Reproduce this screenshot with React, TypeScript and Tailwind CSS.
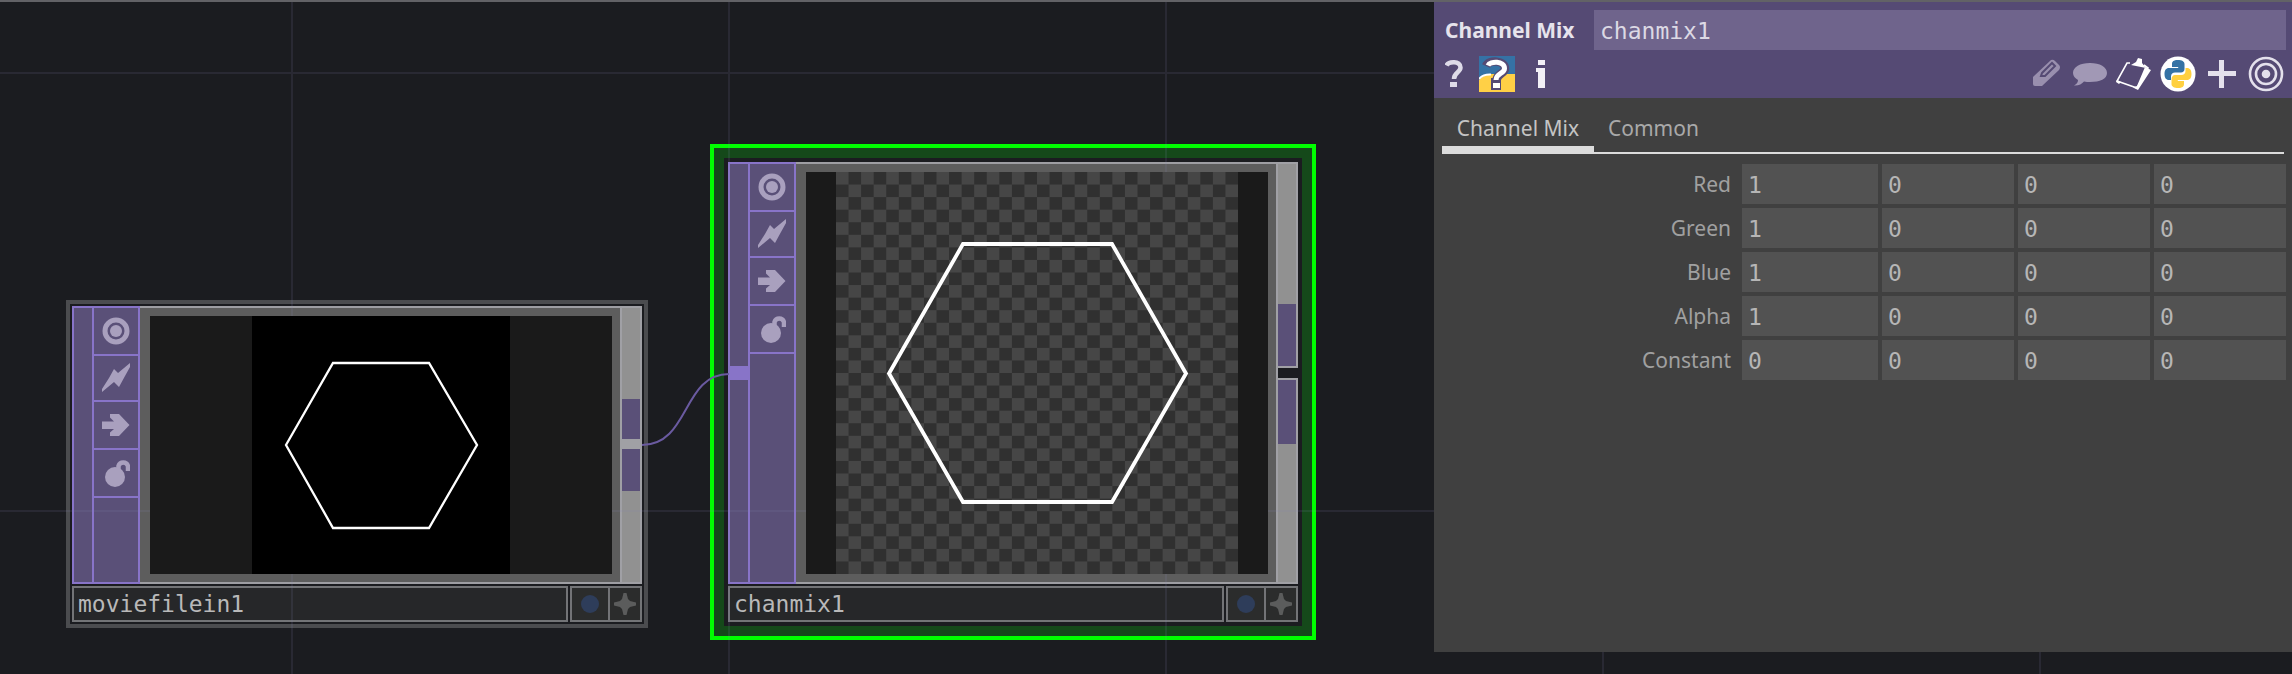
import { useId, type ReactNode } from "react";

const mono = "font-['DejaVu_Sans_Mono',monospace]";

function ViewerIcon() {
  return (
    <svg viewBox="0 0 28 28" className="size-7" aria-hidden="true">
      <circle cx="14" cy="14" r="11" fill="none" stroke="#a9a0be" strokeWidth="5" />
      <circle cx="14" cy="14" r="6" fill="#a9a0be" />
    </svg>
  );
}

function BoltIcon() {
  return (
    <svg viewBox="0 0 28 30" className="h-[30px] w-7" fill="#a9a0be" aria-hidden="true">
      <path d="M0 29V26L7 15L12 6L16 10L28 0V4L23 13L17 24L12 19Z" />
    </svg>
  );
}

function ArrowIcon() {
  return (
    <svg viewBox="0 0 28 28" className="size-7" fill="#a9a0be" aria-hidden="true">
      <path d="M0 10.500H12L8 6.500V3H17L27.500 14L17 25H8V21.500L12 18H0Z" />
    </svg>
  );
}

function LockIcon() {
  return (
    <svg viewBox="0 0 28 28" className="size-7" aria-hidden="true">
      <circle cx="13" cy="18" r="10" fill="#a9a0be" />
      <path d="M16.500 11V7A5 5 0 0 1 26 7V12" fill="none" stroke="#a9a0be" strokeWidth="4.500" />
    </svg>
  );
}

function FlagButton({ label, height, children }: { label: string; height: string; children: ReactNode }) {
  return (
    <button
      type="button"
      aria-label={label}
      className={`flex items-center justify-center border-b-2 border-[#8874c8] ${height}`}
    >
      {children}
    </button>
  );
}

function Flags({ input }: { input?: boolean }) {
  return (
    <div className="flex w-[68px] border-2 border-[#8874c8] bg-[#5a5078]">
      <div className="flex w-5 flex-col justify-center border-r-2 border-[#8874c8]">
        {input && <div className="h-[14px] bg-[#8874c8]" />}
      </div>
      <div className="flex flex-1 flex-col">
        <FlagButton label="Viewer active" height="h-12">
          <ViewerIcon />
        </FlagButton>
        <FlagButton label="Bypass" height="h-[46px]">
          <BoltIcon />
        </FlagButton>
        <FlagButton label="Clone immune" height="h-12">
          <ArrowIcon />
        </FlagButton>
        <FlagButton label="Lock" height="h-12">
          <LockIcon />
        </FlagButton>
      </div>
    </div>
  );
}

function NameBar({ name }: { name: string }) {
  return (
    <div className="mt-[2px] flex h-9 gap-[2px]">
      <div
        className={`flex flex-1 items-center border-2 border-[#737477] bg-[#262729] px-1 text-[23px] leading-8 text-[#b9b9b9] ${mono}`}
      >
        {name}
      </div>
      <div className="flex w-[72px] border-2 border-[#737477] bg-[#2b2c2c]">
        <button type="button" aria-label="Display" className="flex w-[38px] items-center justify-center border-r-2 border-[#737477]">
          <span className="size-[18px] rounded-full bg-[#2e3d5a]" />
        </button>
        <button type="button" aria-label="Activate viewer" className="flex flex-1 items-center justify-center">
          <svg viewBox="0 0 22 22" className="size-[22px]" fill="#5b5c5c" aria-hidden="true">
            <path d="M9.500 0H12.500L14 6L16 8L22 9.500V12.500L16 14L14 16L12.500 22H9.500L8 16L6 14L0 12.500V9.500L6 8L8 6Z" />
          </svg>
        </button>
      </div>
    </div>
  );
}

function Checker() {
  const id = useId();
  return (
    <svg viewBox="0 0 402 402" className="h-full w-[402px]" role="img" aria-label="White hexagon on transparency">
      <defs>
        <pattern id={id} width="2" height="2" patternUnits="userSpaceOnUse" patternTransform="scale(12.5625)">
          <rect width="2" height="2" fill="#464646" />
          <path d="M1 0H2V1H1ZM0 1H1V2H0Z" fill="#303030" />
        </pattern>
      </defs>
      <rect width="402" height="402" fill={`url(#${id})`} shapeRendering="crispEdges" />
      <path d="M53 201.500L127 72H276L350 201.500L276 330H127Z" fill="none" stroke="#fff" strokeWidth="3.800" />
    </svg>
  );
}

function MovieFileNode() {
  return (
    <article className="absolute top-[300px] left-[66px] w-[582px] border-4 border-[#4b4c4f] bg-[#1b1c20] p-[2px]">
      <div className="flex h-[278px]">
        <Flags />
        <div className="flex flex-1 border-y-2 border-[#9e9ea3] bg-[#5d5d5d] py-2 pr-2 pl-[10px]">
          <div className="relative z-20 flex flex-1 justify-center bg-[#1a1a1a]">
            <svg viewBox="0 0 258 258" className="h-full w-[258px] bg-black" role="img" aria-label="White hexagon">
              <path d="M34 129L81 47H177L225 129L177 212H81Z" fill="none" stroke="#fff" strokeWidth="2.300" />
            </svg>
          </div>
        </div>
        <div className="flex w-[22px] flex-col justify-center border-2 border-[#a0a0a5] bg-[#919191]">
          <div className="h-10 bg-[#5a5078]" />
          <div className="h-[10px] bg-[#a0a0a5]" />
          <div className="h-[42px] bg-[#5a5078]" />
        </div>
      </div>
      <NameBar name="moviefilein1" />
    </article>
  );
}

function ChannelMixNode() {
  return (
    <article className="absolute top-[144px] left-[710px] w-[606px] border-4 border-[#00ff00] bg-[#15491a] p-[10px]">
      <div className="bg-[#1b1c20] p-1">
        <div className="flex h-[422px]">
          <Flags input />
          <div className="flex flex-1 border-y-2 border-[#9e9ea3] bg-[#5d5d5d] py-2 pr-2 pl-[10px]">
            <div className="relative z-20 flex flex-1 justify-center bg-[#1a1a1a]">
              <Checker />
            </div>
          </div>
          <div className="flex w-[22px] flex-col border-l-2 border-[#a0a0a5]">
            <div className="flex h-[206px] flex-col justify-end border-y-2 border-r-2 border-[#a0a0a5] bg-[#919191]">
              <div className="h-[62px] bg-[#5a5078]" />
            </div>
            <div className="h-[10px]" />
            <div className="flex-1 border-y-2 border-r-2 border-[#a0a0a5] bg-[#919191]">
              <div className="h-16 bg-[#5a5078]" />
            </div>
          </div>
        </div>
        <NameBar name="chanmix1" />
      </div>
    </article>
  );
}

function GridLines() {
  const id = useId();
  return (
    <svg className="pointer-events-none absolute inset-0 z-10 size-full" aria-hidden="true">
      <defs>
        <pattern id={id} x="291" y="72" width="437" height="438" patternUnits="userSpaceOnUse">
          <path d="M0 0H437V2H2V438H0Z" fill="#8080b4" fillOpacity="0.13" />
        </pattern>
      </defs>
      <rect width="100%" height="100%" fill={`url(#${id})`} />
    </svg>
  );
}

function Wire() {
  return (
    <svg viewBox="0 0 90 80" className="pointer-events-none absolute top-[370px] left-[642px] z-10 h-20 w-[90px]" aria-hidden="true">
      <path d="M0 75C48 75 40 4 87 4" fill="none" stroke="#6a5aa0" strokeWidth="2" />
    </svg>
  );
}

function PythonMark() {
  return (
    <>
      <path
        fill="#3572a5"
        d="M17.800 4C13.500 4 12 5.600 12 8V11H18.200V12H9C6 12 4.500 14.200 4.500 18C4.500 21.800 6 24 9 24H11V20.500C11 18 12.800 16.500 15 16.500H21C23 16.500 24.500 15 24.500 13V8C24.500 5.500 22 4 17.800 4Z"
      />
      <path
        fill="#ffd040"
        d="M18.200 32C22.500 32 24 30.400 24 28V25H17.800V24H27C30 24 31.500 21.800 31.500 18C31.500 14.200 30 12 27 12H25.500V15C25.500 17.500 23.700 19 21.500 19H15C13 19 11.500 21 11.500 23V28C11.500 30.500 14 32 18.200 32Z"
      />
    </>
  );
}

function LeftTools() {
  return (
    <div className="flex items-center gap-4">
      <button type="button" aria-label="Help" className="flex h-9 w-[18px]">
        <svg viewBox="0 0 18 36" className="h-9 w-[18px]" aria-hidden="true">
          <path d="M1.500 9.500C3.500 5 15.500 4.500 15.500 11.500C15.500 16.500 9 16 9 23" fill="none" stroke="#dedbe8" strokeWidth="4.500" />
          <rect x="5" y="26" width="7" height="5" fill="#dedbe8" />
        </svg>
      </button>
      <button type="button" aria-label="Python help" className="flex size-9">
        <svg viewBox="0 0 36 36" className="size-9" aria-hidden="true">
          <rect width="36" height="36" fill="#3572a5" />
          <path d="M0 24Q4 19 11 18H36V36H0Z" fill="#ffd046" />
          <path d="M0 23Q4 18 12 18.500" fill="none" stroke="#fff" strokeWidth="2" />
          <path d="M7 10C10 3 26 4.500 26 12.500C26 18 17.500 17 17.500 25" fill="none" stroke="#554a74" strokeWidth="8.500" />
          <rect x="12" y="22" width="10" height="12" fill="#554a74" />
          <path d="M9 9.500C11 5 25.500 4.500 25.500 12.500C25.500 18 17 17 17 24" fill="none" stroke="#fff" strokeWidth="5" />
          <rect x="14" y="27" width="7" height="5" fill="#fff" />
        </svg>
      </button>
      <button type="button" aria-label="Operator info" className="flex h-9 w-5 justify-center">
        <svg viewBox="0 0 12 36" className="h-9 w-3" fill="#f2f0f6" aria-hidden="true">
          <path d="M3 4H10V9H3ZM1 12H10V32H3V16H1Z" />
        </svg>
      </button>
    </div>
  );
}

function RightTools() {
  return (
    <div className="flex items-center gap-2 pr-[2px]">
      <button type="button" aria-label="Edit" className="size-9">
        <svg viewBox="0 0 36 36" className="size-9" aria-hidden="true">
          <path d="M6 20L23 4Q25 3 27 5L31 9Q33 11 31 14L14 30H7Q5 30 5 28V21Z" fill="#998fae" />
          <path d="M14 17L24 7L27 10L17 20L13 20Z" fill="none" stroke="#554a74" strokeWidth="2" />
        </svg>
      </button>
      <button type="button" aria-label="Comment" className="size-9">
        <svg viewBox="0 0 36 36" className="size-9" fill="#a198b5" aria-hidden="true">
          <path d="M18 7C28 7 35 11 35 17C35 23 28 26 18 26C16 26 14 26 12 25.500C10 28 6 30 2 29.500C5 28 6 26 6 24C3 22 1 20 1 17C1 11 8 7 18 7Z" />
        </svg>
      </button>
      <button type="button" aria-label="Copy parameters" className="size-9">
        <svg viewBox="0 0 36 36" className="size-9" aria-hidden="true">
          <path d="M14 7H11L1 25L21 32L32 12L28 9" fill="none" stroke="#fff" strokeWidth="1.600" />
          <path d="M29 11L35 14L22 34L17 31.500L21 30Z" fill="#fff" />
          <path d="M1 24L5 26L3 28L0 26Z" fill="#fff" />
          <path d="M15 9L20 6L22 2L26 3L26 7L30 12Z" fill="#fff" />
        </svg>
      </button>
      <button type="button" aria-label="Python" className="size-9">
        <svg viewBox="0 0 36 36" className="size-9" aria-hidden="true">
          <circle cx="18" cy="18" r="17.500" fill="#fff" />
          <PythonMark />
        </svg>
      </button>
      <button type="button" aria-label="Add custom parameter" className="size-9">
        <svg viewBox="0 0 36 36" className="size-9" fill="#e4e1ec" aria-hidden="true">
          <path d="M15 4H20V15H32V20H20V32H15V20H4V15H15Z" />
        </svg>
      </button>
      <button type="button" aria-label="Locate" className="size-9">
        <svg viewBox="0 0 36 36" className="size-9" fill="none" stroke="#e4e1ec" strokeWidth="2.600" aria-hidden="true">
          <circle cx="18" cy="18" r="16" />
          <circle cx="18" cy="18" r="10" />
          <circle cx="18" cy="18" r="3" fill="#e4e1ec" />
        </svg>
      </button>
    </div>
  );
}

const rows: { label: string; values: string[] }[] = [
  { label: "Red", values: ["1", "0", "0", "0"] },
  { label: "Green", values: ["1", "0", "0", "0"] },
  { label: "Blue", values: ["1", "0", "0", "0"] },
  { label: "Alpha", values: ["1", "0", "0", "0"] },
  { label: "Constant", values: ["0", "0", "0", "0"] },
];

function ParameterPanel() {
  return (
    <aside className="relative z-30 ml-auto min-h-[650px] w-[37.435%] bg-[#404040]">
      <header className="h-24 bg-[#554a74] pt-2 pr-[6px] pl-[11px]">
        <div className="flex h-10 items-center">
          <label
            htmlFor="op-name"
            className="w-[149px] font-['Noto_Sans',sans-serif] text-[21px] leading-10 font-bold whitespace-nowrap text-[#e6e3ec]"
          >
            Channel Mix
          </label>
          <input
            id="op-name"
            defaultValue="chanmix1"
            className={`h-10 min-w-0 flex-1 bg-[#6f648c] px-[6px] pt-[2px] text-[23px] text-[#dcd9e4] outline-none ${mono}`}
          />
        </div>
        <div className="mt-[6px] flex items-center justify-between">
          <LeftTools />
          <RightTools />
        </div>
      </header>
      <nav className="mr-2 ml-2 flex h-14 items-end border-b-2 border-[#dcdcdc] font-['Noto_Sans',sans-serif] text-[21px] leading-[30px]">
        <button type="button" className="-mb-[2px] h-11 w-[152px] border-b-8 border-[#dcdcdc] text-[#c4c4c4]">
          Channel Mix
        </button>
        <button type="button" className="h-[42px] px-[14px] pb-[6px] text-[#a9a9a9]">
          Common
        </button>
      </nav>
      <div className="flex flex-col gap-1 pt-[10px] pr-[6px]">
        {rows.map((row) => (
          <div key={row.label} className="flex h-10 items-center">
            <label
              htmlFor={`${row.label}-0`}
              className="w-[308px] pr-[11px] text-right font-['Noto_Sans',sans-serif] text-[21px] leading-10 text-[#a0a0a0]"
            >
              {row.label}
            </label>
            <div className="grid min-w-0 flex-1 grid-cols-[34fr_33fr_33fr_33fr] gap-1">
              {row.values.map((value, i) => (
                <input
                  key={i}
                  id={`${row.label}-${i}`}
                  aria-label={`${row.label} ${i + 1}`}
                  defaultValue={value}
                  className={`h-10 min-w-0 bg-[#525252] px-[6px] pt-[2px] text-[23px] text-[#b6b6b6] outline-none ${mono}`}
                />
              ))}
            </div>
          </div>
        ))}
      </div>
    </aside>
  );
}

export default function App() {
  return (
    <main className="relative min-h-screen overflow-hidden border-t-2 border-[#626266] bg-[#1b1c20]">
      <section aria-label="Network editor" className="absolute inset-0 -mt-[2px]">
        <MovieFileNode />
        <ChannelMixNode />
        <GridLines />
        <Wire />
      </section>
      <ParameterPanel />
    </main>
  );
}
